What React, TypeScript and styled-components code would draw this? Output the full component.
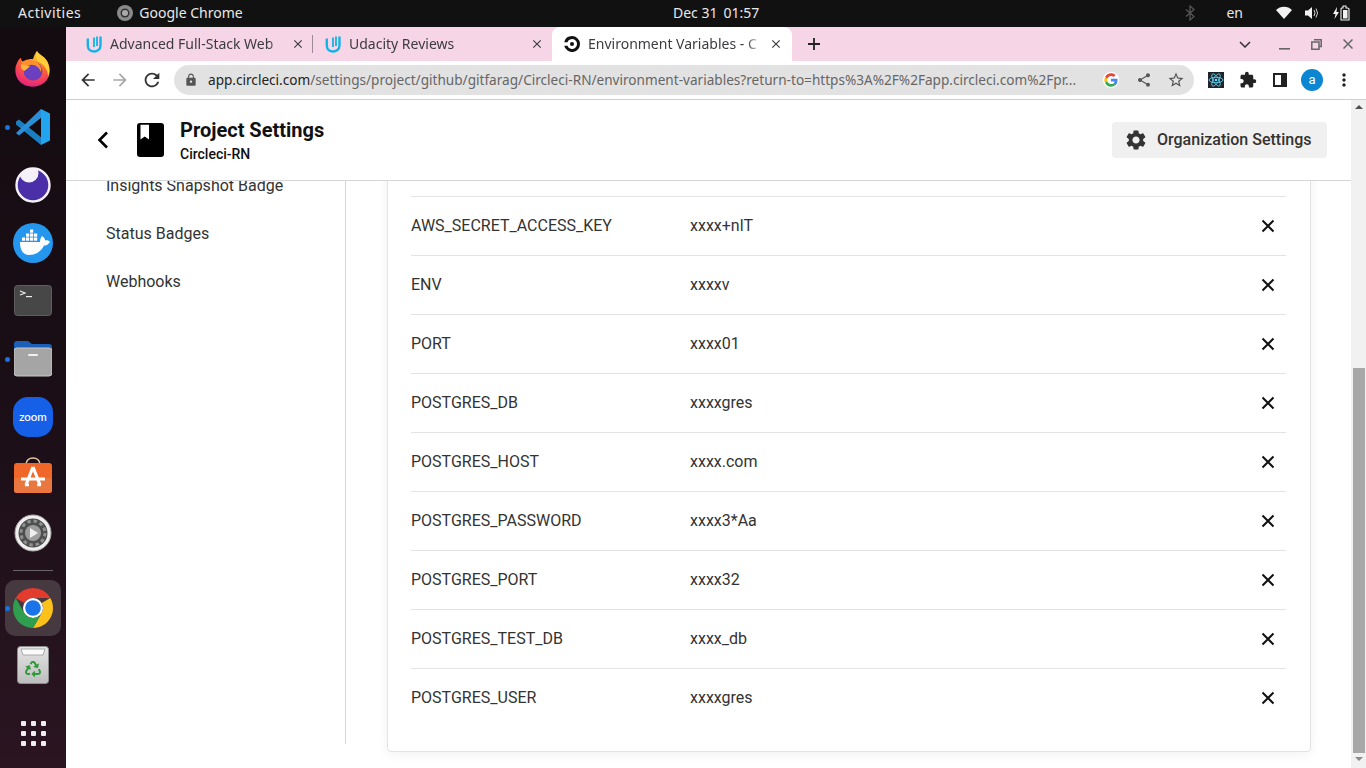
import React from "react";
import styled, { createGlobalStyle } from "styled-components";
import { FaRecycle } from "react-icons/fa";
import {
  MdArrowBack,
  MdArrowForward,
  MdClose,
  MdExtension,
  MdLock,
  MdMoreVert,
  MdOutlineStarBorder,
  MdRefresh,
  MdSettings,
  MdShare,
} from "react-icons/md";

const GlobalStyle = createGlobalStyle`
  html, body {
    margin: 0;
    padding: 0;
    width: 1366px;
    height: 768px;
    overflow: hidden;
    background: #fff;
  }
  * { box-sizing: border-box; }
`;

const Screen = styled.div`
  width: 1366px;
  height: 768px;
  display: flex;
  flex-direction: column;
  overflow: hidden;
  font-family: "Roboto", "Liberation Sans", sans-serif;
`;

/* gnome top bar */
const TopBar = styled.div`
  height: 27px;
  flex: none;
  background: #111111;
  color: #e8e8e8;
  font-family: "Noto Sans", "Liberation Sans", sans-serif;
  font-size: 14px;
  display: grid;
  grid-template-columns: 655px auto 1fr;
  align-items: center;
  padding: 0 16px 2px 18px;
`;

const TopLeft = styled.div`
  display: flex;
  align-items: center;
`;

const Activities = styled.span`
  letter-spacing: 0.5px;
`;

const AppName = styled.div`
  display: flex;
  align-items: center;
  gap: 6px;
  margin-left: 36px;
`;

const Clock = styled.div`
  display: flex;
  gap: 6px;
`;

const TopRight = styled.div`
  display: flex;
  align-items: center;
  justify-content: flex-end;
`;

const Lang = styled.span`
  margin: 0 33px 0 31px;
`;

const Tray = styled.div`
  display: flex;
  align-items: center;
  gap: 13px;
`;

const Desktop = styled.div`
  flex: 1;
  display: flex;
  min-height: 0;
`;

/* ubuntu dock */
const Dock = styled.div`
  width: 66px;
  flex: none;
  background: linear-gradient(180deg, #130b10 0%, #1c0f17 55%, #2a1521 100%);
  display: flex;
  flex-direction: column;
  align-items: center;
  padding-top: 13px;
`;

const DockItem = styled.div`
  position: relative;
  width: 56px;
  height: 58px;
  flex: none;
  display: flex;
  align-items: center;
  justify-content: center;
`;

const ActiveDockItem = styled(DockItem)`
  height: 56px;
  margin-top: 9px;
  border-radius: 10px;
  background: #46393f;
`;

const RunDot = styled.span`
  position: absolute;
  left: 0;
  top: 50%;
  width: 5px;
  height: 5px;
  margin-top: -2px;
  border-radius: 50%;
  background: #1673e6;
`;

const DockSeparator = styled.div`
  width: 40px;
  height: 1px;
  flex: none;
  margin-top: 8px;
  background: #6b6468;
`;

const AppGrid = styled.div`
  margin-top: auto;
  margin-bottom: 22px;
  display: grid;
  grid-template-columns: repeat(3, 5px);
  gap: 5px;
`;

const GridDot = styled.span`
  width: 5px;
  height: 5px;
  border-radius: 1px;
  background: #eeeeee;
`;

const Browser = styled.div`
  flex: 1;
  min-width: 0;
  display: flex;
  flex-direction: column;
`;

const TabStrip = styled.div`
  height: 34px;
  flex: none;
  background: #f5d5e6;
  display: flex;
  align-items: stretch;
  padding-left: 8px;
`;

const Tab = styled.div<{ $active?: boolean; $divider?: boolean }>`
  position: relative;
  width: ${({ $active }) => ($active ? "240px" : "239px")};
  flex: none;
  display: flex;
  align-items: center;
  padding: 0 ${({ $active }) => ($active ? "9px" : "8px")} 0 12px;
  border-radius: 8px 8px 0 0;
  background: ${({ $active }) => ($active ? "#ffffff" : "transparent")};
  color: #3c3c40;

  ${({ $divider }) =>
    $divider &&
    `&::after {
      content: "";
      position: absolute;
      right: 0;
      top: 8px;
      height: 18px;
      width: 1px;
      background: #9a8a92;
    }`}
`;

const TabTitle = styled.span`
  flex: 1;
  min-width: 0;
  margin-left: 8px;
  padding-bottom: 2px;
  font-family: "Noto Sans", "Liberation Sans", sans-serif;
  font-size: 14px;
  white-space: nowrap;
  overflow: hidden;
  -webkit-mask-image: linear-gradient(90deg, #000 calc(100% - 14px), transparent 100%);
  mask-image: linear-gradient(90deg, #000 calc(100% - 14px), transparent 100%);
`;

const TabClose = styled(MdClose)`
  flex: none;
  margin-left: 8px;
  color: #3c3c40;
`;

const NewTab = styled.div`
  width: 44px;
  flex: none;
  display: flex;
  align-items: center;
  justify-content: center;
`;

const WindowControls = styled.div`
  margin-left: auto;
  display: flex;
  align-items: center;
  gap: 16px;
  padding-right: 10px;
  color: #555;
`;

const WindowButton = styled.div<{ $wide?: boolean }>`
  width: 16px;
  height: 16px;
  margin-right: ${({ $wide }) => ($wide ? "7px" : "0")};
  display: flex;
  align-items: center;
  justify-content: center;
`;

const Toolbar = styled.div`
  height: 39px;
  flex: none;
  background: #fff;
  border-bottom: 1px solid #cfcfcf;
  display: flex;
  align-items: center;
  padding: 0 11px 1px 6px;
`;

const NavButton = styled.div<{ $muted?: boolean }>`
  width: 32px;
  height: 24px;
  flex: none;
  display: flex;
  align-items: center;
  justify-content: center;
  color: ${({ $muted }) => ($muted ? "#a8a8a8" : "#333")};
`;

const Omnibox = styled.div`
  width: 1020px;
  height: 30px;
  flex: none;
  margin: 0 6px;
  border-radius: 15px;
  background: #e2e2e2;
  display: flex;
  align-items: center;
  padding: 0 2px 0 10px;
`;

const LockIcon = styled(MdLock)`
  flex: none;
  color: #555;
`;

const Url = styled.div`
  width: 878px;
  flex: none;
  margin-left: 10px;
  font-family: "Noto Sans", "Liberation Sans", sans-serif;
  font-size: 13.6px;
  color: #666;
  white-space: nowrap;
`;

const Host = styled.span`
  color: #222;
`;

const GoogleBadge = styled.div`
  width: 16px;
  height: 16px;
  flex: none;
  margin: 0 9px 0 17px;
  display: flex;
`;

const OmniAction = styled.div`
  width: 32px;
  flex: none;
  display: flex;
  align-items: center;
  justify-content: center;
  color: #555;
`;

const ExtensionSlot = styled(NavButton)`
  color: #222;
`;

const Avatar = styled.div`
  width: 22px;
  height: 22px;
  border-radius: 50%;
  background: #0b86d3;
  color: #fff;
  font-size: 13px;
  display: flex;
  align-items: center;
  justify-content: center;
`;

const Viewport = styled.div`
  flex: 1;
  min-height: 0;
  display: flex;
`;

const Page = styled.div`
  flex: 1;
  min-width: 0;
  display: flex;
  flex-direction: column;
`;

/* circleci page header */
const PageHeader = styled.header`
  height: 81px;
  flex: none;
  border-bottom: 1px solid #d6d6d6;
  display: flex;
  align-items: center;
  padding: 0 24px 0 25px;
`;

const BackChevron = styled.div`
  width: 24px;
  display: flex;
  justify-content: center;
`;

const ProjectIcon = styled.div`
  display: flex;
  margin-left: 22px;
`;

const Titles = styled.div`
  margin-left: 16px;
  color: #111;
`;

const Title = styled.div`
  font-size: 20px;
  font-weight: 700;
  line-height: 24px;
`;

const Subtitle = styled.div`
  margin-top: 4px;
  font-size: 14px;
  font-weight: 500;
  line-height: 16px;
`;

const OrgButton = styled.div`
  margin-left: auto;
  width: 215px;
  height: 36px;
  border-radius: 4px;
  background: #f0f0f0;
  color: #333;
  font-size: 16px;
  font-weight: 500;
  display: flex;
  align-items: center;
  gap: 9px;
  padding: 0 0 0 12px;
`;

const OrgLabel = styled.span`
  padding-bottom: 2px;
`;

const ScrollPane = styled.div`
  flex: 1;
  min-height: 0;
  overflow: hidden;
`;

const Columns = styled.div`
  margin-top: -20px;
  display: flex;
  align-items: flex-start;
`;

const SideNav = styled.nav`
  width: 280px;
  height: 583px;
  flex: none;
  border-right: 1px solid #d6d6d6;
  padding-left: 40px;
`;

const SideLink = styled.div`
  height: 48px;
  display: flex;
  align-items: center;
  font-size: 16px;
  color: #333;
`;

const Card = styled.section`
  width: 924px;
  margin-left: 41px;
  padding: 34px 24px 24px 23px;
  background: #fff;
  border: 1px solid #e3e3e3;
  border-radius: 4px;
  box-shadow: 0 2px 12px rgba(0, 0, 0, 0.06);
`;

const VarRow = styled.div`
  height: 59px;
  display: flex;
  align-items: center;
  border-top: 1px solid #e3e3e3;
  font-size: 16px;
  color: #333;
`;

const VarName = styled.div`
  width: 279px;
  flex: none;
  padding-bottom: 2px;
`;

const VarValue = styled.div`
  flex: 1;
  padding-bottom: 2px;
`;

const DeleteIcon = styled.svg`
  flex: none;
  margin-right: 11px;
`;

const Scrollbar = styled.div`
  width: 15px;
  flex: none;
  background: #f1f1f1;
  display: flex;
  flex-direction: column;
  align-items: center;
`;

const ScrollArrow = styled.div<{ $down?: boolean }>`
  flex: none;
  width: 0;
  height: 0;
  margin: ${({ $down }) => ($down ? "4px 0 0" : "5px 0 0")};
  border-left: 4px solid transparent;
  border-right: 4px solid transparent;
  ${({ $down }) =>
    $down ? "border-top: 4px solid #8a8a8a;" : "border-bottom: 4px solid #505050;"}
`;

const ScrollThumb = styled.div`
  width: 12px;
  height: 385px;
  flex: none;
  margin-top: 259px;
  background: #a8a8a8;
`;

const variables = [
  ["AWS_SECRET_ACCESS_KEY", "xxxx+nlT"],
  ["ENV", "xxxxv"],
  ["PORT", "xxxx01"],
  ["POSTGRES_DB", "xxxxgres"],
  ["POSTGRES_HOST", "xxxx.com"],
  ["POSTGRES_PASSWORD", "xxxx3*Aa"],
  ["POSTGRES_PORT", "xxxx32"],
  ["POSTGRES_TEST_DB", "xxxx_db"],
  ["POSTGRES_USER", "xxxxgres"],
];

const UdacityIcon = () => (
  <svg width="16" height="18" viewBox="0 0 16 18">
    <path
      d="M1.800 3.500 V10.500 C1.800 14.500 5 16.500 8 16.500 C11 16.500 14.500 14.500 14.500 10.500 V1.500"
      fill="none"
      stroke="#14b3e6"
      strokeWidth="2.400"
    />
    <path d="M8 2.500 V12 M11 1.500 V11" fill="none" stroke="#14b3e6" strokeWidth="1.800" />
  </svg>
);

const CircleciIcon = () => (
  <svg width="16" height="16" viewBox="0 0 16 16">
    <circle cx="8" cy="8" r="2" fill="#111" />
    <path
      d="M8 0 A8 8 0 1 1 .2 9.8 H3.4 A5 5 0 1 0 3.4 6.2 H.2 A8 8 0 0 1 8 0 Z"
      fill="#111"
    />
  </svg>
);

const FirefoxIcon = () => (
  <svg width="36" height="38" viewBox="0 0 36 38">
    <defs>
      <radialGradient id="ffBody" cx="0.6" cy="0.15" r="0.95">
        <stop offset="0" stopColor="#ffbd2e" />
        <stop offset="0.45" stopColor="#ff6a2b" />
        <stop offset="0.8" stopColor="#f0306c" />
        <stop offset="1" stopColor="#c81f8c" />
      </radialGradient>
    </defs>
    <path
      d="M22 1 C24 5 31 7 33 13 C36 20 35 28 29 33 C22 38 11 38 5 32 C0 27 -1 19 2 13 C3 10 5 8 6 8 C6 10 7 11 8 12 C11 9 15 9 18 9 C19 6 20 3 22 1 Z"
      fill="url(#ffBody)"
    />
    <path
      d="M22 1 C24 5 31 7 33 13 C35 18 35 23 33 27 C33 21 30 15 24 12 C21 10 20 5 22 1 Z"
      fill="#ffcf3a"
    />
    <circle cx="18" cy="21" r="9.5" fill="#6a3fc0" />
    <path
      d="M9 11 C13 9 19 10 23 13 C26 16 27 19 26 22 C24 17 20 14 15 15 C11 16 8 15 6 12 Z"
      fill="#ff8f2b"
    />
    <path d="M6 14 L15 16 L12 19 L9 21 L6 18 Z" fill="#ffb33c" />
  </svg>
);

const VsCodeIcon = () => (
  <svg width="36" height="36" viewBox="0 0 36 36">
    <path d="M1 12.5 L4 10.5 L27 29 L26 36 L1 15.5 Z" fill="#1a7ec2" />
    <path d="M1 24 L26 0 L27 8 L4 26.5 Z" fill="#2a8fd6" />
    <path d="M26 0 L35 4.5 V31.5 L26 36 Z" fill="#22a5ee" />
    <path d="M26 10 V26 L15 18 Z" fill="#130b10" />
  </svg>
);

const EclipseIcon = () => (
  <svg width="36" height="36" viewBox="0 0 36 36">
    <defs>
      <clipPath id="eclipseDisc">
        <circle cx="18" cy="18" r="16.5" />
      </clipPath>
    </defs>
    <circle cx="18" cy="18" r="16.5" fill="#4b2fa8" />
    <circle cx="14" cy="6" r="9.500" fill="#f4f2f8" clipPath="url(#eclipseDisc)" />
    <circle cx="18" cy="18" r="16.5" fill="none" stroke="#f4f2f8" strokeWidth="2.4" />
  </svg>
);

const DockerIcon = () => (
  <svg width="40" height="40" viewBox="0 0 40 40">
    <circle cx="20" cy="20" r="20" fill="#2496ed" />
    <path
      d="M7 19 H27 C27 16 28 14 29 13 C31 14 32 16 32 17.500 C34 17 36 17.500 37 19 C35 22 33 22.500 31 22.500 C28 29 22 32 16 32 C10 32 7 27 7 19 Z"
      fill="#fff"
    />
    <g fill="#fff">
      <rect x="9" y="14.500" width="3.200" height="3.200" />
      <rect x="13" y="14.500" width="3.200" height="3.200" />
      <rect x="17" y="14.500" width="3.200" height="3.200" />
      <rect x="21" y="14.500" width="3.200" height="3.200" />
      <rect x="13" y="10.500" width="3.200" height="3.200" />
      <rect x="17" y="10.500" width="3.200" height="3.200" />
      <rect x="21" y="10.500" width="3.200" height="3.200" />
      <rect x="17" y="6.500" width="3.200" height="3.200" />
    </g>
  </svg>
);

const TerminalIcon = () => (
  <svg width="38" height="32" viewBox="0 0 38 32">
    <rect width="37" height="30" x=".5" y=".5" rx="3" fill="#474747" stroke="#5e5e5e" />
    <path d="M6 6 L11 8 L6 10" fill="none" stroke="#eee" strokeWidth="1.2" />
    <rect x="12" y="11" width="6" height="1.2" fill="#eee" />
  </svg>
);

const FilesIcon = () => (
  <svg width="38" height="36" viewBox="0 0 38 36">
    <path d="M0 3 Q0 0 3 0 H14 L18 3 H35 Q38 3 38 6 V16 H0 Z" fill="#1a5fb8" />
    <rect y="7" width="38" height="28" rx="3" fill="#a5a5a5" stroke="#c8c8c8" />
    <rect x="14" y="13" width="10" height="2" rx="1" fill="#f0f0f0" />
  </svg>
);

const ZoomIcon = () => (
  <svg width="40" height="40" viewBox="0 0 40 40">
    <rect width="40" height="40" rx="15" fill="#1660e8" />
    <text
      x="20"
      y="24"
      textAnchor="middle"
      fill="#fff"
      fontFamily="Lato, sans-serif"
      fontSize="11.5"
      fontWeight="500"
    >
      zoom
    </text>
  </svg>
);

const StoreIcon = () => (
  <svg width="38" height="36" viewBox="0 0 38 36">
    <path d="M12 7 Q13 1 19 1 Q25 1 26 7" fill="none" stroke="#e8c9a0" strokeWidth="1.5" />
    <rect y="6" width="38" height="30" rx="3" fill="#f0672a" />
    <rect y="21" width="38" height="15" rx="3" fill="#e9773f" />
    <path
      d="M19 10 L26 28 M19 10 L12 28 M7 22 H31"
      stroke="#fff"
      strokeWidth="3.2"
      fill="none"
    />
    <path d="M11 28 H15 M23 28 H27" stroke="#fff" strokeWidth="2.4" />
  </svg>
);

const SettingsIcon = () => (
  <svg width="38" height="38" viewBox="0 0 38 38">
    <circle cx="19" cy="19" r="18" fill="#efefef" stroke="#a9a9a9" />
    <circle cx="19" cy="19" r="14.5" fill="#4e4e4e" />
    <circle cx="19" cy="19" r="12" fill="none" stroke="#8f8f8f" strokeWidth="3" strokeDasharray="3.5 2.8" />
    <circle cx="19" cy="19" r="8" fill="#9d9d9d" />
    <path d="M16 14 L24 19 L16 24 Z" fill="#efefef" />
  </svg>
);

const ChromeIcon = ({ size }: { size: number }) => (
  <svg width={size} height={size} viewBox="0 0 40 40">
    <path d="M20 0 A20 20 0 0 1 37.3 10 H20 A10 10 0 0 0 11.3 15 L2.7 10 A20 20 0 0 1 20 0 Z" fill="#e33b2e" />
    <path d="M37.3 10 A20 20 0 0 1 20 40 L28.7 25 A10 10 0 0 0 28.7 15 Z" fill="#fcc21b" />
    <path d="M2.7 10 L11.3 25 A10 10 0 0 0 28.7 25 L20 40 A20 20 0 0 1 2.7 10 Z" fill="#2f9e4f" />
    <circle cx="20" cy="20" r="10" fill="#fff" />
    <circle cx="20" cy="20" r="7.8" fill="#1a73e8" />
  </svg>
);

const TrashIcon = () => (
  <svg width="32" height="38" viewBox="0 0 32 38">
    <defs>
      <linearGradient id="trashBody" x1="0" x2="0" y1="0" y2="1">
        <stop offset="0" stopColor="#e4e4e4" />
        <stop offset="1" stopColor="#bdbdbd" />
      </linearGradient>
    </defs>
    <rect x=".5" y=".5" width="31" height="37" rx="3" fill="url(#trashBody)" stroke="#8c8c8c" />
    <path d="M4 3 H28 L26 9 H6 Z" fill="#fafafa" stroke="#8f8f8f" strokeWidth=".7" />
    <FaRecycle x="8" y="15" size={16} color="#2f9a3a" />
  </svg>
);

const GoogleIcon = () => (
  <svg width="16" height="16" viewBox="0 0 48 48">
    <circle cx="24" cy="24" r="24" fill="#fff" />
    <path fill="#ea4335" d="M24 12c3 0 5.700 1 7.800 3l5.800-5.800C34 5.900 29.400 4 24 4 16.200 4 9.500 8.500 6.200 15l6.800 5.300C14.600 15.400 18.900 12 24 12z" />
    <path fill="#4285f4" d="M43.600 24.500c0-1.400-.1-2.700-.4-4H24v8h11c-.5 2.600-2 4.800-4.100 6.200l6.500 5c3.800-3.500 6.200-8.800 6.200-15.200z" />
    <path fill="#fbbc05" d="M13 27.700c-.4-1.200-.6-2.400-.6-3.700s.2-2.500.6-3.700L6.200 15C4.800 17.700 4 20.800 4 24s.8 6.300 2.200 9l6.800-5.300z" />
    <path fill="#34a853" d="M24 44c5.400 0 9.900-1.800 13.400-4.800l-6.500-5c-1.800 1.200-4.100 1.900-6.900 1.900-5.100 0-9.400-3.400-11-8.100L6.200 33C9.500 39.500 16.200 44 24 44z" />
  </svg>
);

const ReactExtension = () => (
  <svg width="16" height="16" viewBox="0 0 16 16">
    <rect width="16" height="16" fill="#20232a" />
    <g fill="none" stroke="#61dafb" strokeWidth=".8">
      <ellipse cx="8" cy="8" rx="7" ry="2.700" />
      <ellipse cx="8" cy="8" rx="7" ry="2.700" transform="rotate(60 8 8)" />
      <ellipse cx="8" cy="8" rx="7" ry="2.700" transform="rotate(120 8 8)" />
    </g>
    <circle cx="8" cy="8" r="1.300" fill="#61dafb" />
  </svg>
);

const App: React.FunctionComponent = () => {
  return (
    <Screen>
      <GlobalStyle />
      <TopBar>
        <TopLeft>
          <Activities>Activities</Activities>
          <AppName>
            <svg width="16" height="16" viewBox="0 0 16 16">
              <circle cx="8" cy="8" r="8" fill="#8a8a8a" />
              <circle cx="8" cy="8" r="4.500" fill="#333" />
              <circle cx="8" cy="8" r="3" fill="#aaa" />
            </svg>
            Google Chrome
          </AppName>
        </TopLeft>
        <Clock>
          <span>Dec 31</span>
          <span>01:57</span>
        </Clock>
        <TopRight>
          <svg width="10" height="16" viewBox="0 0 10 16">
            <path d="M1 4.500 L9 11.500 L5 15 V1 L9 4.500 L1 11.500" fill="none" stroke="#555" strokeWidth="1.300" />
          </svg>
          <Lang>en</Lang>
          <Tray>
            <svg width="16" height="13" viewBox="0 0 16 13">
              <path d="M0 4 C4 -.5 12 -.5 16 4 L8 13 Z" fill="#f2f2f2" />
            </svg>
            <svg width="15" height="14" viewBox="0 0 15 14">
              <path d="M0 4.500 H3 L7 1 V13 L3 9.500 H0 Z" fill="#f2f2f2" />
              <path d="M9 4 Q11 7 9 10 M11 2.500 Q14 7 11 11.500" fill="none" stroke="#d0d0d0" />
            </svg>
            <svg width="17" height="16" viewBox="0 0 17 16">
              <path d="M4 2 L0 9 H2.500 L1.500 14 L6 7 H3.500 Z" fill="#f2f2f2" />
              <path d="M8.500 3 H10 V1 H13 V3 H14.500 Q16 3 16 4 V15 H8 V4 Z" fill="none" stroke="#f2f2f2" strokeWidth="1.100" />
              <rect x="10" y="5" width="4.500" height="8.500" fill="#f2f2f2" />
            </svg>
          </Tray>
        </TopRight>
      </TopBar>
      <Desktop>
        <Dock>
          <DockItem>
            <FirefoxIcon />
          </DockItem>
          <DockItem>
            <RunDot />
            <VsCodeIcon />
          </DockItem>
          <DockItem>
            <EclipseIcon />
          </DockItem>
          <DockItem>
            <DockerIcon />
          </DockItem>
          <DockItem>
            <TerminalIcon />
          </DockItem>
          <DockItem>
            <RunDot />
            <FilesIcon />
          </DockItem>
          <DockItem>
            <ZoomIcon />
          </DockItem>
          <DockItem>
            <StoreIcon />
          </DockItem>
          <DockItem>
            <SettingsIcon />
          </DockItem>
          <DockSeparator />
          <ActiveDockItem>
            <RunDot />
            <ChromeIcon size={40} />
          </ActiveDockItem>
          <DockItem>
            <TrashIcon />
          </DockItem>
          <AppGrid>
            {Array.from({ length: 9 }, (_, i) => (
              <GridDot key={i} />
            ))}
          </AppGrid>
        </Dock>
        <Browser>
          <TabStrip>
            <Tab $divider>
              <UdacityIcon />
              <TabTitle>Advanced Full-Stack Web</TabTitle>
              <TabClose size={14} />
            </Tab>
            <Tab>
              <UdacityIcon />
              <TabTitle>Udacity Reviews</TabTitle>
              <TabClose size={14} />
            </Tab>
            <Tab $active>
              <CircleciIcon />
              <TabTitle>Environment Variables - C</TabTitle>
              <TabClose size={14} />
            </Tab>
            <NewTab>
              <svg width="12" height="12" viewBox="0 0 12 12">
                <path d="M6 0 V12 M0 6 H12" stroke="#222" strokeWidth="1.800" />
              </svg>
            </NewTab>
            <WindowControls>
              <WindowButton $wide>
                <svg width="12" height="7" viewBox="0 0 12 7">
                  <path d="M1 1 L6 6 L11 1" fill="none" stroke="#333" strokeWidth="1.500" />
                </svg>
              </WindowButton>
              <WindowButton>
                <svg width="11" height="12" viewBox="0 0 11 12">
                  <rect y="10" width="11" height="1.600" fill="#666" />
                </svg>
              </WindowButton>
              <WindowButton>
                <svg width="11" height="11" viewBox="0 0 11 11">
                  <path d="M3 .8 H10.200 V7.500 H8 M.8 3 H8 V10.200 H.8 Z" fill="none" stroke="#666" strokeWidth="1.500" />
                </svg>
              </WindowButton>
              <WindowButton>
                <svg width="10" height="10" viewBox="0 0 10 10">
                  <path d="M.5 .5 L9.500 9.500 M9.500 .5 L.5 9.500" stroke="#666" strokeWidth="1.500" />
                </svg>
              </WindowButton>
            </WindowControls>
          </TabStrip>
          <Toolbar>
            <NavButton>
              <MdArrowBack size={20} />
            </NavButton>
            <NavButton $muted>
              <MdArrowForward size={20} />
            </NavButton>
            <NavButton>
              <MdRefresh size={22} />
            </NavButton>
            <Omnibox>
              <LockIcon size={14} />
              <Url>
                <Host>app.circleci.com</Host>
                /settings/project/github/gitfarag/Circleci-RN/environment-variables?return-to=https%3A%2F%2Fapp.circleci.com%2Fpr...
              </Url>
              <GoogleBadge>
                <GoogleIcon />
              </GoogleBadge>
              <OmniAction>
                <MdShare size={16} />
              </OmniAction>
              <OmniAction>
                <MdOutlineStarBorder size={18} />
              </OmniAction>
            </Omnibox>
            <ExtensionSlot>
              <ReactExtension />
            </ExtensionSlot>
            <ExtensionSlot>
              <MdExtension size={18} />
            </ExtensionSlot>
            <ExtensionSlot>
              <svg width="14" height="14" viewBox="0 0 14 14">
                <rect x="1" y="1" width="12" height="12" fill="none" stroke="#222" strokeWidth="2" />
                <rect x="8" y="1" width="5" height="12" fill="#222" />
              </svg>
            </ExtensionSlot>
            <ExtensionSlot>
              <Avatar>a</Avatar>
            </ExtensionSlot>
            <ExtensionSlot>
              <MdMoreVert size={20} />
            </ExtensionSlot>
          </Toolbar>
          <Viewport>
            <Page>
              <PageHeader>
                <BackChevron>
                  <svg width="12" height="18" viewBox="0 0 12 18">
                    <path d="M10 1.500 L2.500 9 L10 16.500" fill="none" stroke="#000" strokeWidth="2.600" />
                  </svg>
                </BackChevron>
                <ProjectIcon>
                  <svg width="27" height="34" viewBox="0 0 27 34">
                    <rect width="27" height="34" rx="3" fill="#000" />
                    <path d="M3.500 1.700 H12 V16.500 L7.750 13.500 L3.500 16.500 Z" fill="#fff" />
                  </svg>
                </ProjectIcon>
                <Titles>
                  <Title>Project Settings</Title>
                  <Subtitle>Circleci-RN</Subtitle>
                </Titles>
                <OrgButton>
                  <MdSettings size={24} />
                  <OrgLabel>Organization Settings</OrgLabel>
                </OrgButton>
              </PageHeader>
              <ScrollPane>
                <Columns>
                  <SideNav>
                    <SideLink>Insights Snapshot Badge</SideLink>
                    <SideLink>Status Badges</SideLink>
                    <SideLink>Webhooks</SideLink>
                  </SideNav>
                  <Card>
                    {variables.map(([name, value]) => (
                      <VarRow key={name}>
                        <VarName>{name}</VarName>
                        <VarValue>{value}</VarValue>
                        <DeleteIcon width="14" height="14" viewBox="0 0 14 14">
                          <path d="M1.500 1.500 L12.500 12.500 M12.500 1.500 L1.500 12.500" stroke="#111" strokeWidth="2" />
                        </DeleteIcon>
                      </VarRow>
                    ))}
                  </Card>
                </Columns>
              </ScrollPane>
            </Page>
            <Scrollbar>
              <ScrollArrow />
              <ScrollThumb />
              <ScrollArrow $down />
            </Scrollbar>
          </Viewport>
        </Browser>
      </Desktop>
    </Screen>
  );
};

export default App;
